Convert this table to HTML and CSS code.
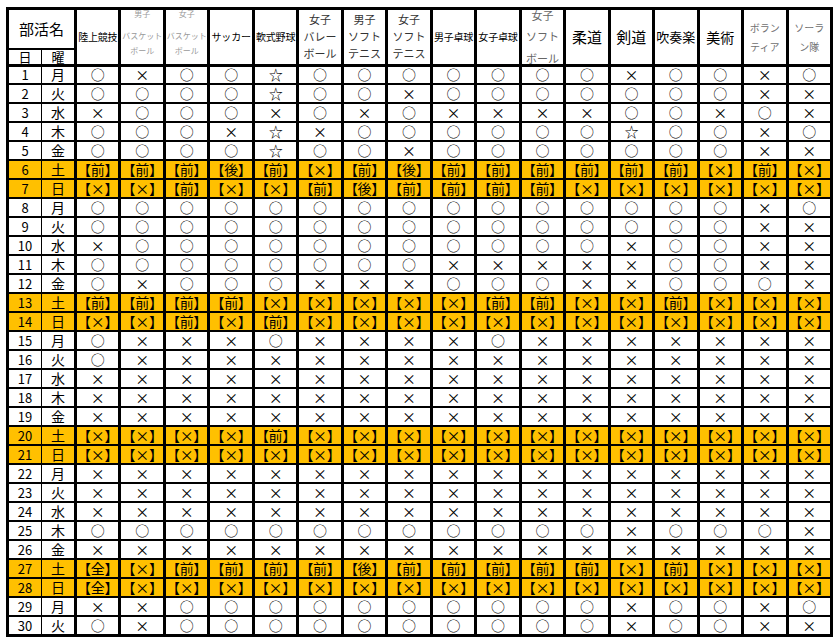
FILE: index.html
```html
<!DOCTYPE html>
<html lang="ja">
<head>
<meta charset="utf-8">
<title>部活動予定表</title>
<link rel="stylesheet" href="styles.css">
</head>
<body>
<table class="sched">
<colgroup><col class="c-day"><col class="c-dow"><col span="17" class="c-club"></colgroup>
<thead>
<tr class="h1">
<th colspan="2" class="name">部活名</th>
<th rowspan="2" class="t10">陸上競技</th>
<th rowspan="2"><div class="stk bk"><span>男子</span><span>バスケット</span><span>ボール</span></div></th>
<th rowspan="2"><div class="stk bk"><span>女子</span><span>バスケット</span><span>ボール</span></div></th>
<th rowspan="2" class="t10">サッカー</th>
<th rowspan="2" class="t10">軟式野球</th>
<th rowspan="2"><div class="stk s3"><span>女子</span><span>バレー</span><span>ボール</span></div></th>
<th rowspan="2"><div class="stk s3"><span>男子</span><span>ソフト</span><span>テニス</span></div></th>
<th rowspan="2"><div class="stk s3"><span>女子</span><span>ソフト</span><span>テニス</span></div></th>
<th rowspan="2" class="t10">男子卓球</th>
<th rowspan="2" class="t10">女子卓球</th>
<th rowspan="2"><div class="stk sb"><span>女子</span><span>ソフト</span><span>ボール</span></div></th>
<th rowspan="2" class="t15">柔道</th>
<th rowspan="2" class="t15">剣道</th>
<th rowspan="2" class="t13">吹奏楽</th>
<th rowspan="2" class="t14">美術</th>
<th rowspan="2"><div class="stk s2"><span>ボラン</span><span>ティア</span></div></th>
<th rowspan="2"><div class="stk s2"><span>ソーラ</span><span>ン隊</span></div></th>
</tr>
<tr class="h2"><th class="day">日</th><th class="dow">曜</th></tr>
</thead>
<tbody>
<tr><td class="day">1</td><td class="dow">月</td><td>○</td><td>×</td><td>○</td><td>○</td><td>☆</td><td>○</td><td>○</td><td>○</td><td>○</td><td>○</td><td>○</td><td>○</td><td>×</td><td>○</td><td>○</td><td>×</td><td>○</td></tr>
<tr><td class="day">2</td><td class="dow">火</td><td>○</td><td>○</td><td>○</td><td>○</td><td>☆</td><td>○</td><td>○</td><td>×</td><td>○</td><td>○</td><td>○</td><td>○</td><td>○</td><td>○</td><td>○</td><td>×</td><td>×</td></tr>
<tr><td class="day">3</td><td class="dow">水</td><td>×</td><td>○</td><td>○</td><td>○</td><td>×</td><td>○</td><td>×</td><td>○</td><td>×</td><td>×</td><td>×</td><td>×</td><td>○</td><td>○</td><td>×</td><td>○</td><td>×</td></tr>
<tr><td class="day">4</td><td class="dow">木</td><td>○</td><td>○</td><td>○</td><td>×</td><td>☆</td><td>×</td><td>○</td><td>○</td><td>○</td><td>○</td><td>○</td><td>○</td><td>☆</td><td>○</td><td>○</td><td>×</td><td>○</td></tr>
<tr><td class="day">5</td><td class="dow">金</td><td>○</td><td>○</td><td>○</td><td>○</td><td>☆</td><td>○</td><td>○</td><td>×</td><td>○</td><td>○</td><td>○</td><td>○</td><td>○</td><td>○</td><td>○</td><td>×</td><td>×</td></tr>
<tr class="we"><td class="day">6</td><td class="dow">土</td><td>【前】</td><td>【前】</td><td>【前】</td><td>【後】</td><td>【前】</td><td>【×】</td><td>【前】</td><td>【後】</td><td>【前】</td><td>【前】</td><td>【前】</td><td>【前】</td><td>【前】</td><td>【前】</td><td>【×】</td><td>【前】</td><td>【×】</td></tr>
<tr class="we"><td class="day">7</td><td class="dow">日</td><td>【×】</td><td>【×】</td><td>【前】</td><td>【×】</td><td>【×】</td><td>【前】</td><td>【後】</td><td>【前】</td><td>【前】</td><td>【前】</td><td>【前】</td><td>【×】</td><td>【×】</td><td>【×】</td><td>【×】</td><td>【×】</td><td>【×】</td></tr>
<tr><td class="day">8</td><td class="dow">月</td><td>○</td><td>○</td><td>○</td><td>○</td><td>○</td><td>○</td><td>○</td><td>○</td><td>○</td><td>○</td><td>○</td><td>○</td><td>○</td><td>○</td><td>○</td><td>×</td><td>○</td></tr>
<tr><td class="day">9</td><td class="dow">火</td><td>○</td><td>○</td><td>○</td><td>○</td><td>○</td><td>○</td><td>○</td><td>○</td><td>○</td><td>○</td><td>○</td><td>○</td><td>○</td><td>○</td><td>○</td><td>×</td><td>×</td></tr>
<tr><td class="day">10</td><td class="dow">水</td><td>×</td><td>○</td><td>○</td><td>○</td><td>○</td><td>○</td><td>○</td><td>○</td><td>○</td><td>○</td><td>○</td><td>○</td><td>×</td><td>○</td><td>○</td><td>×</td><td>×</td></tr>
<tr><td class="day">11</td><td class="dow">木</td><td>○</td><td>○</td><td>○</td><td>○</td><td>○</td><td>○</td><td>○</td><td>○</td><td>×</td><td>×</td><td>×</td><td>×</td><td>×</td><td>○</td><td>○</td><td>×</td><td>×</td></tr>
<tr><td class="day">12</td><td class="dow">金</td><td>○</td><td>×</td><td>○</td><td>○</td><td>○</td><td>×</td><td>×</td><td>×</td><td>○</td><td>○</td><td>○</td><td>×</td><td>×</td><td>○</td><td>○</td><td>○</td><td>×</td></tr>
<tr class="we"><td class="day">13</td><td class="dow">土</td><td>【前】</td><td>【前】</td><td>【前】</td><td>【前】</td><td>【×】</td><td>【×】</td><td>【×】</td><td>【×】</td><td>【×】</td><td>【前】</td><td>【前】</td><td>【×】</td><td>【×】</td><td>【前】</td><td>【×】</td><td>【×】</td><td>【×】</td></tr>
<tr class="we"><td class="day">14</td><td class="dow">日</td><td>【×】</td><td>【×】</td><td>【前】</td><td>【×】</td><td>【前】</td><td>【×】</td><td>【×】</td><td>【×】</td><td>【×】</td><td>【×】</td><td>【×】</td><td>【×】</td><td>【×】</td><td>【×】</td><td>【×】</td><td>【×】</td><td>【×】</td></tr>
<tr><td class="day">15</td><td class="dow">月</td><td>○</td><td>×</td><td>×</td><td>×</td><td>○</td><td>×</td><td>×</td><td>×</td><td>×</td><td>○</td><td>×</td><td>×</td><td>×</td><td>×</td><td>×</td><td>×</td><td>×</td></tr>
<tr><td class="day">16</td><td class="dow">火</td><td>○</td><td>×</td><td>×</td><td>×</td><td>×</td><td>×</td><td>×</td><td>×</td><td>×</td><td>×</td><td>×</td><td>×</td><td>×</td><td>×</td><td>×</td><td>×</td><td>×</td></tr>
<tr><td class="day">17</td><td class="dow">水</td><td>×</td><td>×</td><td>×</td><td>×</td><td>×</td><td>×</td><td>×</td><td>×</td><td>×</td><td>×</td><td>×</td><td>×</td><td>×</td><td>×</td><td>×</td><td>×</td><td>×</td></tr>
<tr><td class="day">18</td><td class="dow">木</td><td>×</td><td>×</td><td>×</td><td>×</td><td>×</td><td>×</td><td>×</td><td>×</td><td>×</td><td>×</td><td>×</td><td>×</td><td>×</td><td>×</td><td>×</td><td>×</td><td>×</td></tr>
<tr><td class="day">19</td><td class="dow">金</td><td>×</td><td>×</td><td>×</td><td>×</td><td>×</td><td>×</td><td>×</td><td>×</td><td>×</td><td>×</td><td>×</td><td>×</td><td>×</td><td>×</td><td>×</td><td>×</td><td>×</td></tr>
<tr class="we"><td class="day">20</td><td class="dow">土</td><td>【×】</td><td>【×】</td><td>【×】</td><td>【×】</td><td>【前】</td><td>【×】</td><td>【×】</td><td>【×】</td><td>【×】</td><td>【×】</td><td>【×】</td><td>【×】</td><td>【×】</td><td>【×】</td><td>【×】</td><td>【×】</td><td>【×】</td></tr>
<tr class="we"><td class="day">21</td><td class="dow">日</td><td>【×】</td><td>【×】</td><td>【×】</td><td>【×】</td><td>【×】</td><td>【×】</td><td>【×】</td><td>【×】</td><td>【×】</td><td>【×】</td><td>【×】</td><td>【×】</td><td>【×】</td><td>【×】</td><td>【×】</td><td>【×】</td><td>【×】</td></tr>
<tr><td class="day">22</td><td class="dow">月</td><td>×</td><td>×</td><td>×</td><td>×</td><td>×</td><td>×</td><td>×</td><td>×</td><td>×</td><td>×</td><td>×</td><td>×</td><td>×</td><td>×</td><td>×</td><td>×</td><td>×</td></tr>
<tr><td class="day">23</td><td class="dow">火</td><td>×</td><td>×</td><td>×</td><td>×</td><td>×</td><td>×</td><td>×</td><td>×</td><td>×</td><td>×</td><td>×</td><td>×</td><td>×</td><td>×</td><td>×</td><td>×</td><td>×</td></tr>
<tr><td class="day">24</td><td class="dow">水</td><td>×</td><td>×</td><td>×</td><td>×</td><td>×</td><td>×</td><td>×</td><td>×</td><td>×</td><td>×</td><td>×</td><td>×</td><td>×</td><td>×</td><td>×</td><td>×</td><td>×</td></tr>
<tr><td class="day">25</td><td class="dow">木</td><td>○</td><td>○</td><td>○</td><td>○</td><td>○</td><td>○</td><td>○</td><td>○</td><td>○</td><td>○</td><td>○</td><td>○</td><td>×</td><td>○</td><td>○</td><td>○</td><td>×</td></tr>
<tr><td class="day">26</td><td class="dow">金</td><td>×</td><td>×</td><td>×</td><td>×</td><td>×</td><td>×</td><td>×</td><td>×</td><td>×</td><td>×</td><td>×</td><td>×</td><td>×</td><td>×</td><td>×</td><td>×</td><td>×</td></tr>
<tr class="we"><td class="day">27</td><td class="dow">土</td><td>【全】</td><td>【×】</td><td>【前】</td><td>【前】</td><td>【前】</td><td>【前】</td><td>【後】</td><td>【前】</td><td>【前】</td><td>【前】</td><td>【前】</td><td>【前】</td><td>【×】</td><td>【前】</td><td>【×】</td><td>【×】</td><td>【×】</td></tr>
<tr class="we"><td class="day">28</td><td class="dow">日</td><td>【全】</td><td>【×】</td><td>【×】</td><td>【×】</td><td>【×】</td><td>【×】</td><td>【×】</td><td>【×】</td><td>【×】</td><td>【×】</td><td>【×】</td><td>【×】</td><td>【×】</td><td>【×】</td><td>【×】</td><td>【×】</td><td>【×】</td></tr>
<tr><td class="day">29</td><td class="dow">月</td><td>×</td><td>×</td><td>○</td><td>○</td><td>○</td><td>○</td><td>○</td><td>○</td><td>○</td><td>○</td><td>○</td><td>○</td><td>×</td><td>○</td><td>○</td><td>×</td><td>○</td></tr>
<tr><td class="day">30</td><td class="dow">火</td><td>○</td><td>×</td><td>○</td><td>○</td><td>○</td><td>○</td><td>○</td><td>○</td><td>○</td><td>○</td><td>○</td><td>○</td><td>×</td><td>○</td><td>○</td><td>×</td><td>×</td></tr>
</tbody>
</table>
</body>
</html>
```

FILE: styles.css
```css
html, body {
  margin: 0;
  background: #fff;
}
body {
  padding: 7px 0 0 6px;
  font-family: "Noto Sans CJK JP", "Noto Sans", sans-serif;
  color: #000;
}
.sched {
  border-collapse: collapse;
  table-layout: fixed;
  width: 827px;
  border: 3px solid #000;
}
.sched col.c-day,
.sched col.c-dow {
  width: 34px;
}
.sched th,
.sched td {
  padding: 0;
  text-align: center;
  vertical-align: middle;
  border-top: 2px solid #000;
  border-bottom: 2px solid #000;
  border-left: 3px solid #000;
  border-right: 3px solid #000;
  white-space: nowrap;
  font-weight: normal;
}
.sched .day { border-right: 1px solid #000; }
.sched .dow { border-left: 1px solid #000; }

/* header */
.h1 { height: 40px; }
.h2 { height: 16px; }
.sched thead th { border-bottom: 3px solid #000; }
.sched thead th.name { border-bottom: 1px solid #000; font-size: 15px; }
.h2 th { font-size: 13px; line-height: 14px; }
.t10 { font-size: 10px; font-weight: 500; letter-spacing: -0.2px; }
.t13 { font-size: 13px; }
.t14 { font-size: 14px; }
.t15 { font-size: 15px; }

.stk { display: flex; flex-direction: column; align-items: center; }
.stk span { display: block; }
.bk { color: #9a9a9a; font-size: 8px; margin: -4px 0; padding-bottom: 9px; }
.bk span { line-height: 14px; }
.bk span:nth-child(1) { margin-bottom: 8px; }
.bk span:nth-child(3) { margin-top: 1px; }
.s3 { color: #333; font-size: 11px; }
.s3 span { line-height: 17px; }
.sb { color: #666; font-size: 11px; margin: -6px 0; }
.sb span { line-height: 21.5px; }
.s2 { color: #707070; font-size: 10px; }
.s2 span { line-height: 19px; }

/* body */
.sched tbody tr { height: 19px; }
.sched tbody td { font-size: 14px; line-height: 15px; }
.sched tbody td.day { font-size: 13px; }
.sched tbody tr.we td { background: #ffc000; font-feature-settings: "palt"; }
```
